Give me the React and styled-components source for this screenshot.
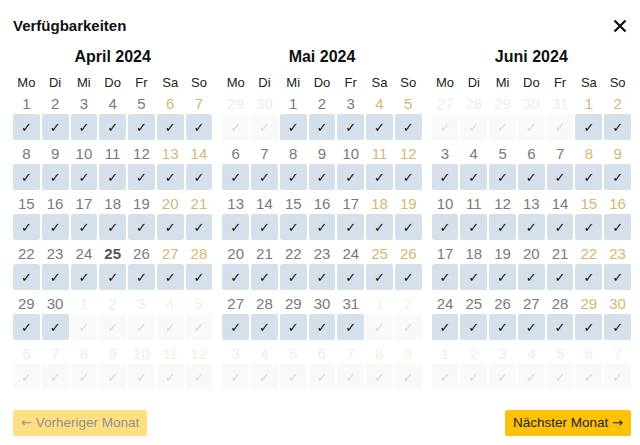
import React from "react";
import styled, { createGlobalStyle } from "styled-components";

const Global = createGlobalStyle`
  html, body { margin: 0; padding: 0; background: #fff; }
  body { font-family: "Liberation Sans", Arial, sans-serif; color: #212529; }
`;

const Page = styled.div`
  width: 640px;
  height: 445px;
  box-sizing: border-box;
  padding: 16px 9px 0 13px;
  display: flex;
  flex-direction: column;
`;

const Header = styled.div`
  display: flex;
  align-items: center;
  justify-content: space-between;
  height: 20px;
`;

const Title = styled.h2`
  margin: 0;
  font-size: 15px;
  line-height: 20px;
  font-weight: 700;
  color: #111;
`;

const Close = styled.button`
  border: 0;
  background: none;
  padding: 0;
  margin-right: 4px;
  width: 14px;
  height: 14px;
  display: flex;
  cursor: pointer;
`;

const Months = styled.div`
  display: grid;
  grid-template-columns: repeat(3, 1fr);
  gap: 10px;
  margin-top: 11px;
`;

const Month = styled.div`
  display: flex;
  flex-direction: column;
`;

const MonthTitle = styled.div`
  text-align: center;
  font-size: 16px;
  line-height: 20px;
  font-weight: 700;
  color: #111;
`;

const Grid = styled.div`
  display: grid;
  grid-template-columns: repeat(7, 1fr);
  column-gap: 2px;
`;

const WeekdayRow = styled(Grid)`
  margin-top: 6px;
  margin-bottom: 1px;
`;

const Weekday = styled.div`
  text-align: center;
  font-size: 13px;
  line-height: 20px;
  color: #222;
`;

const WeekBlock = styled.div`
  display: flex;
  flex-direction: column;
  margin-bottom: 4px;
  &:last-child { margin-bottom: 0; }
`;

const numColor = ({ $out, $weekend, $today }) => {
  if ($out) return $weekend ? "#f7f0dd" : "#eceef0";
  if ($today) return "#555";
  return $weekend ? "#d5b772" : "#7a7a7a";
};

const DayNum = styled.div`
  text-align: center;
  font-size: 15px;
  line-height: 20px;
  height: 20px;
  color: ${numColor};
  font-weight: ${({ $today }) => ($today ? 700 : 400)};
`;

const Cell = styled.div`
  height: 26px;
  border-radius: 2px;
  background: ${({ $out }) => ($out ? "#f7f9fb" : "#d6e0ea")};
  color: ${({ $out }) => ($out ? "#dadada" : "#111")};
  display: flex;
  align-items: center;
  justify-content: center;
  font-family: "DejaVu Sans", sans-serif;
  font-weight: ${({ $out }) => ($out ? 400 : 700)};
  font-size: 13px;
`;

const Footer = styled.div`
  display: flex;
  justify-content: space-between;
  margin-top: 20px;
`;

const NavButton = styled.button`
  height: 26px;
  padding: 0 8px;
  border: 0;
  border-radius: 2px;
  background: #ffc107;
  color: #212529;
  font-family: "Liberation Sans", Arial, sans-serif;
  font-size: 13.5px;
  line-height: 26px;
  opacity: ${({ disabled }) => (disabled ? 0.5 : 1)};
  cursor: ${({ disabled }) => (disabled ? "default" : "pointer")};
`;

const Arrow = styled.span`
  font-family: "DejaVu Sans", sans-serif;
  font-size: 13px;
`;

const WEEKDAYS = ["Mo", "Di", "Mi", "Do", "Fr", "Sa", "So"];

function buildWeeks(year, month) {
  const first = new Date(year, month, 1);
  const offset = (first.getDay() + 6) % 7;
  const weeks = [];
  for (let w = 0; w < 6; w++) {
    const days = [];
    for (let d = 0; d < 7; d++) {
      const date = new Date(year, month, 1 - offset + w * 7 + d);
      days.push({ n: date.getDate(), out: date.getMonth() !== month, weekend: d >= 5 });
    }
    weeks.push(days);
  }
  return weeks;
}

const MONTHS = [
  { title: "April 2024", year: 2024, month: 3, today: 25 },
  { title: "Mai 2024", year: 2024, month: 4 },
  { title: "Juni 2024", year: 2024, month: 5 },
];

function Calendar({ title, year, month, today }) {
  const weeks = buildWeeks(year, month);
  return (
    <Month>
      <MonthTitle>{title}</MonthTitle>
      <WeekdayRow>
        {WEEKDAYS.map((w) => (
          <Weekday key={w}>{w}</Weekday>
        ))}
      </WeekdayRow>
      {weeks.map((week, i) => (
        <WeekBlock key={i}>
          <Grid>
            {week.map((d, j) => (
              <DayNum key={j} $out={d.out} $weekend={d.weekend} $today={!d.out && d.n === today}>
                {d.n}
              </DayNum>
            ))}
          </Grid>
          <Grid>
            {week.map((d, j) => (
              <Cell key={j} $out={d.out}>✓</Cell>
            ))}
          </Grid>
        </WeekBlock>
      ))}
    </Month>
  );
}

export default function App() {
  return (
    <>
      <Global />
      <Page>
        <Header>
          <Title>Verfügbarkeiten</Title>
          <Close aria-label="Schließen">
            <svg width="14" height="14" viewBox="0 0 14 14">
              <path d="M1.5 1.5 L12.5 12.5 M12.5 1.5 L1.5 12.5" stroke="#111" strokeWidth="2.3" strokeLinecap="butt" />
            </svg>
          </Close>
        </Header>
        <Months>
          {MONTHS.map((m) => (
            <Calendar key={m.title} {...m} />
          ))}
        </Months>
        <Footer>
          <NavButton disabled><Arrow>←</Arrow> Vorheriger Monat</NavButton>
          <NavButton>Nächster Monat <Arrow>→</Arrow></NavButton>
        </Footer>
      </Page>
    </>
  );
}
